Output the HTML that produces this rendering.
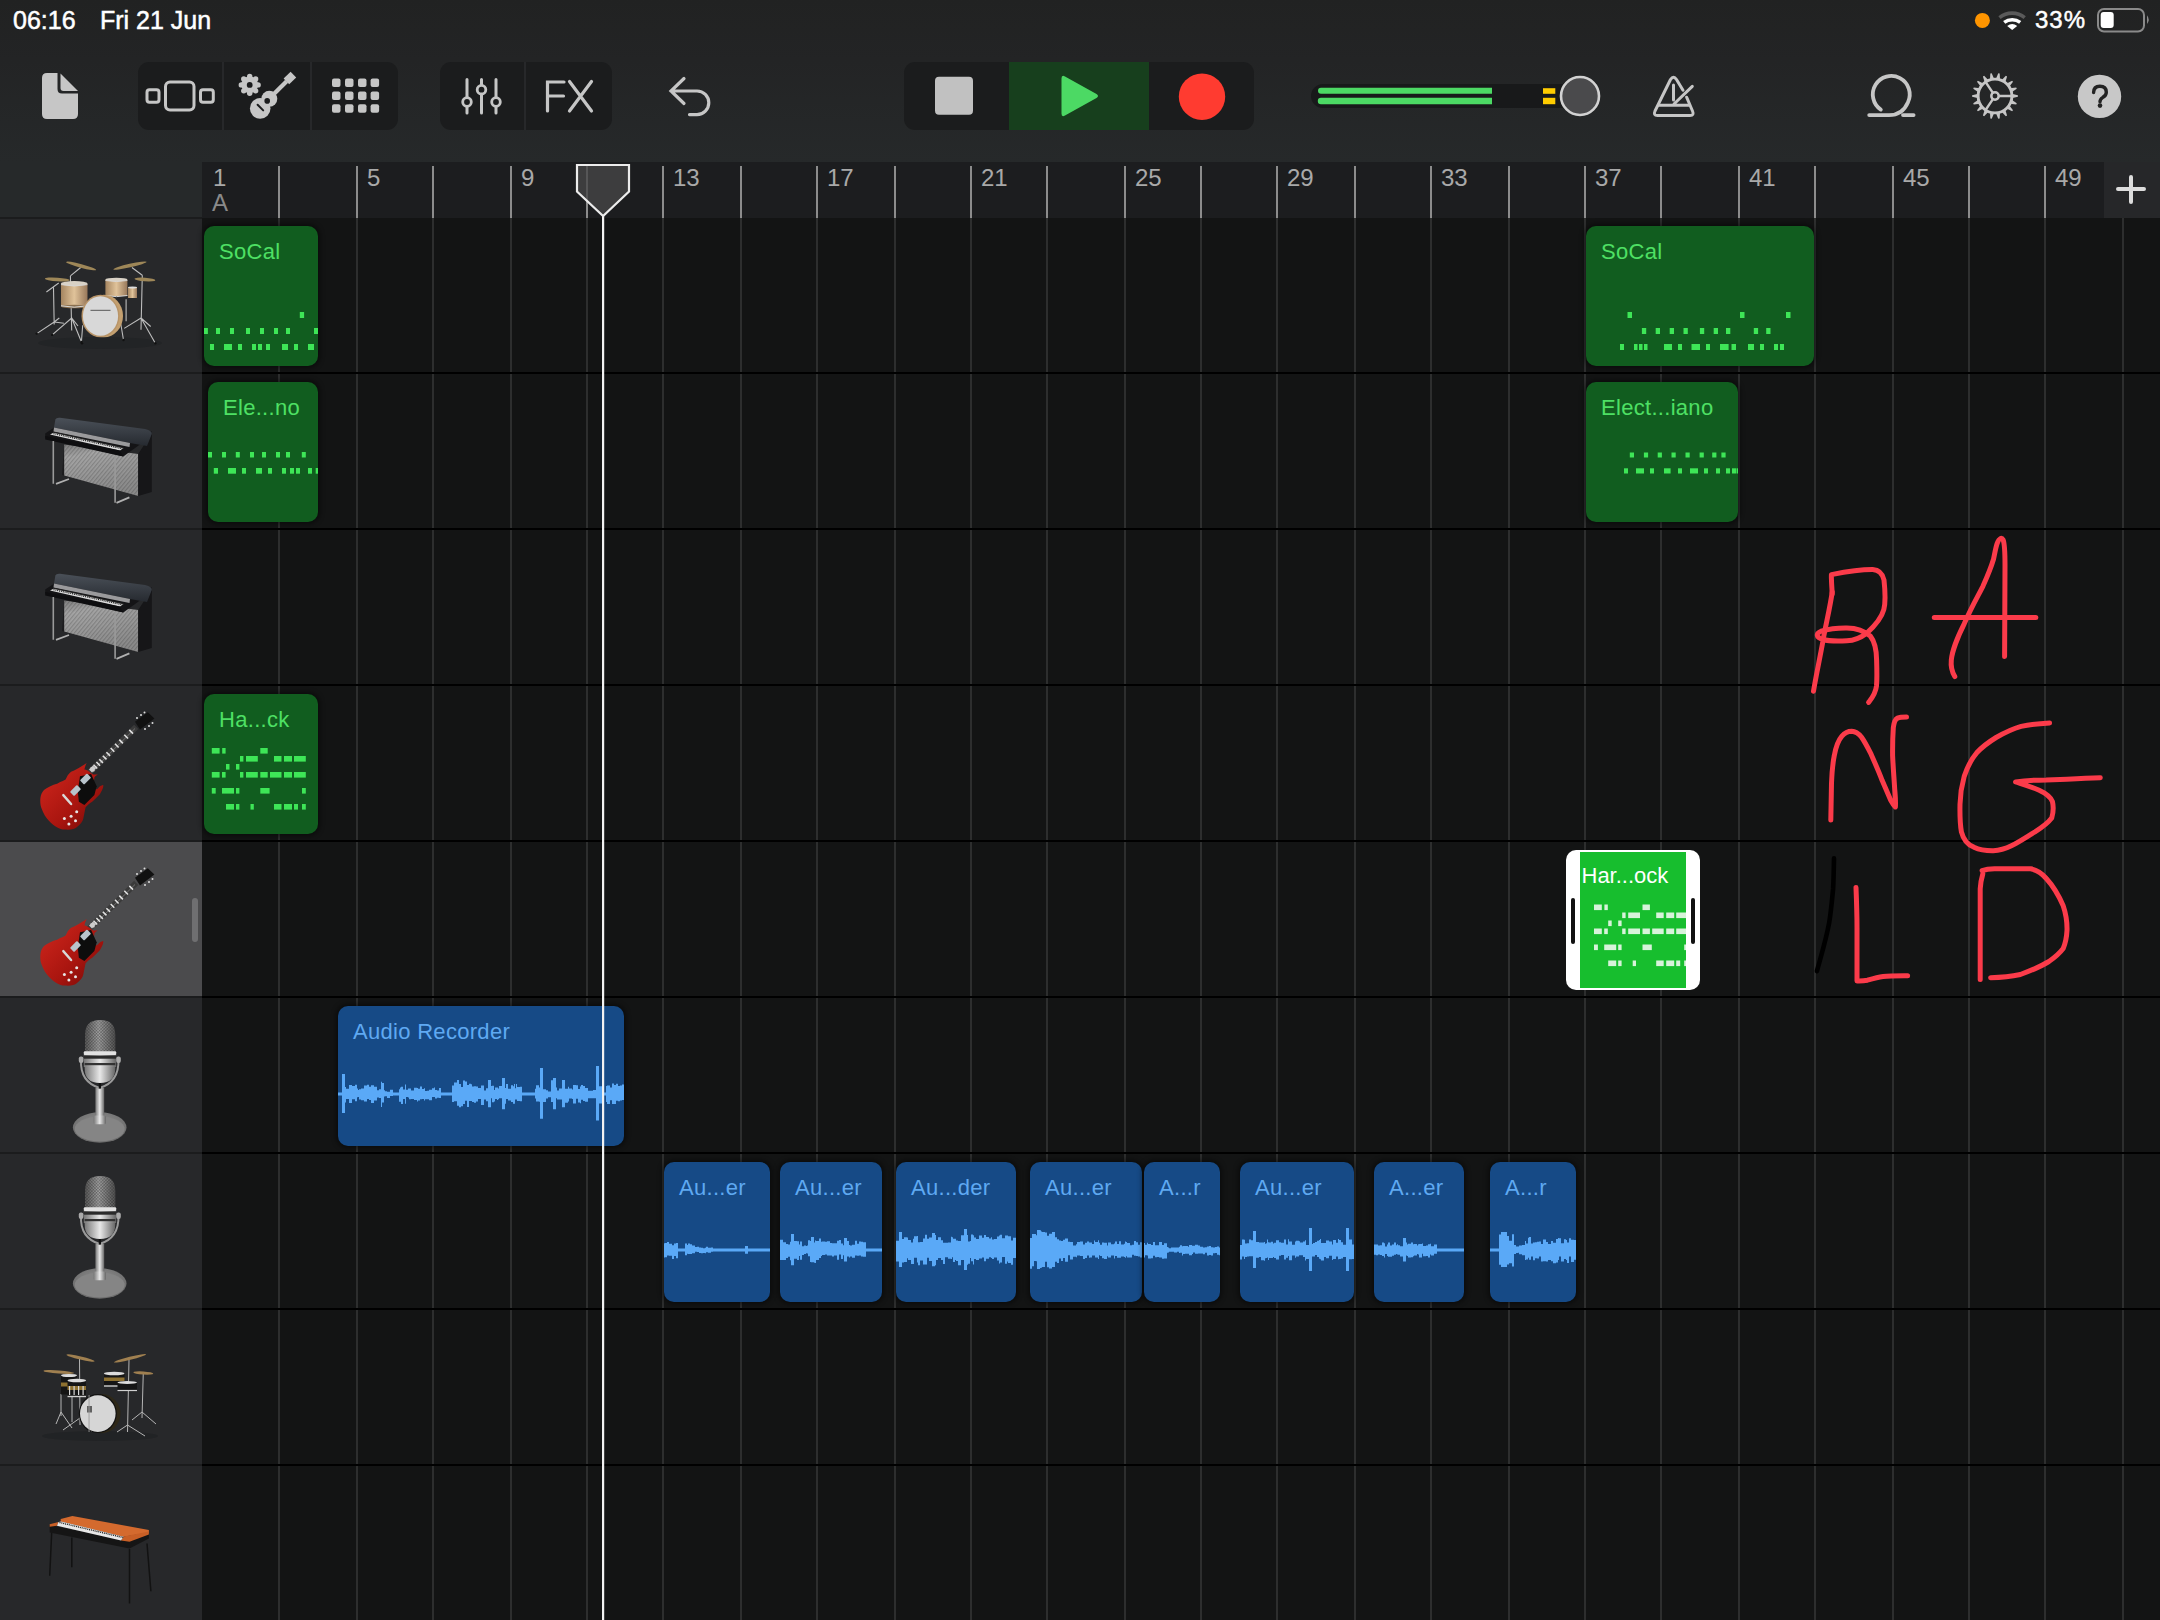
<!DOCTYPE html><html><head><meta charset="utf-8"><style>
*{margin:0;padding:0;box-sizing:border-box}
html,body{width:2160px;height:1620px;overflow:hidden;background:#131414;font-family:"Liberation Sans", sans-serif}
.a{position:absolute}
.reg{position:absolute;border-radius:10px;overflow:hidden;box-shadow:0 0 5px 2px rgba(0,0,0,0.45)}
.mid{background:#115d1f}
.aud{background:#164a86}
.rt{position:absolute;left:15px;top:14.5px;font-size:22px;line-height:22px;white-space:nowrap;letter-spacing:0.3px}
.mid .rt{color:#4ee064}
.aud .rt{color:#5fa9f2}
</style></head><body>
<div class="a" style="left:0;top:0;width:2160px;height:218px;background:linear-gradient(#212222 0px,#232425 60px,#26292a 162px)"></div><div class="a" style="left:0;top:218px;width:202px;height:1402px;background:#27282a"></div><div class="a" style="left:202px;top:162px;width:1902px;height:56px;background:#1c1d1f"></div><div class="a" style="left:2104px;top:162px;width:56px;height:56px;background:#262729"></div><svg class="a" style="left:0;top:0" width="2160" height="1620" viewBox="0 0 2160 1620"><rect x="278.00" y="166" width="2" height="52" fill="#8c8c8c"/><rect x="278.00" y="218" width="2" height="1402" fill="#2d2e2e"/><rect x="356.00" y="166" width="2" height="52" fill="#8c8c8c"/><rect x="356.00" y="218" width="2" height="1402" fill="#2d2e2e"/><rect x="432.00" y="166" width="2" height="52" fill="#8c8c8c"/><rect x="432.00" y="218" width="2" height="1402" fill="#2d2e2e"/><rect x="510.00" y="166" width="2" height="52" fill="#8c8c8c"/><rect x="510.00" y="218" width="2" height="1402" fill="#2d2e2e"/><rect x="586.00" y="166" width="2" height="52" fill="#8c8c8c"/><rect x="586.00" y="218" width="2" height="1402" fill="#2d2e2e"/><rect x="662.00" y="166" width="2" height="52" fill="#8c8c8c"/><rect x="662.00" y="218" width="2" height="1402" fill="#2d2e2e"/><rect x="740.00" y="166" width="2" height="52" fill="#8c8c8c"/><rect x="740.00" y="218" width="2" height="1402" fill="#2d2e2e"/><rect x="816.00" y="166" width="2" height="52" fill="#8c8c8c"/><rect x="816.00" y="218" width="2" height="1402" fill="#2d2e2e"/><rect x="894.00" y="166" width="2" height="52" fill="#8c8c8c"/><rect x="894.00" y="218" width="2" height="1402" fill="#2d2e2e"/><rect x="970.00" y="166" width="2" height="52" fill="#8c8c8c"/><rect x="970.00" y="218" width="2" height="1402" fill="#2d2e2e"/><rect x="1046.00" y="166" width="2" height="52" fill="#8c8c8c"/><rect x="1046.00" y="218" width="2" height="1402" fill="#2d2e2e"/><rect x="1124.00" y="166" width="2" height="52" fill="#8c8c8c"/><rect x="1124.00" y="218" width="2" height="1402" fill="#2d2e2e"/><rect x="1200.00" y="166" width="2" height="52" fill="#8c8c8c"/><rect x="1200.00" y="218" width="2" height="1402" fill="#2d2e2e"/><rect x="1276.00" y="166" width="2" height="52" fill="#8c8c8c"/><rect x="1276.00" y="218" width="2" height="1402" fill="#2d2e2e"/><rect x="1354.00" y="166" width="2" height="52" fill="#8c8c8c"/><rect x="1354.00" y="218" width="2" height="1402" fill="#2d2e2e"/><rect x="1430.00" y="166" width="2" height="52" fill="#8c8c8c"/><rect x="1430.00" y="218" width="2" height="1402" fill="#2d2e2e"/><rect x="1508.00" y="166" width="2" height="52" fill="#8c8c8c"/><rect x="1508.00" y="218" width="2" height="1402" fill="#2d2e2e"/><rect x="1584.00" y="166" width="2" height="52" fill="#8c8c8c"/><rect x="1584.00" y="218" width="2" height="1402" fill="#2d2e2e"/><rect x="1660.00" y="166" width="2" height="52" fill="#8c8c8c"/><rect x="1660.00" y="218" width="2" height="1402" fill="#2d2e2e"/><rect x="1738.00" y="166" width="2" height="52" fill="#8c8c8c"/><rect x="1738.00" y="218" width="2" height="1402" fill="#2d2e2e"/><rect x="1814.00" y="166" width="2" height="52" fill="#8c8c8c"/><rect x="1814.00" y="218" width="2" height="1402" fill="#2d2e2e"/><rect x="1892.00" y="166" width="2" height="52" fill="#8c8c8c"/><rect x="1892.00" y="218" width="2" height="1402" fill="#2d2e2e"/><rect x="1968.00" y="166" width="2" height="52" fill="#8c8c8c"/><rect x="1968.00" y="218" width="2" height="1402" fill="#2d2e2e"/><rect x="2044.00" y="166" width="2" height="52" fill="#8c8c8c"/><rect x="2044.00" y="218" width="2" height="1402" fill="#2d2e2e"/><rect x="2122.00" y="218" width="2" height="1402" fill="#2d2e2e"/><rect x="0" y="217" width="202" height="2" fill="#1b1c1d"/><rect x="0" y="372" width="202" height="2" fill="#1b1c1d"/><rect x="202" y="372" width="1958" height="2" fill="#000"/><rect x="0" y="528" width="202" height="2" fill="#1b1c1d"/><rect x="202" y="528" width="1958" height="2" fill="#000"/><rect x="0" y="684" width="202" height="2" fill="#1b1c1d"/><rect x="202" y="684" width="1958" height="2" fill="#000"/><rect x="0" y="840" width="202" height="2" fill="#1b1c1d"/><rect x="202" y="840" width="1958" height="2" fill="#000"/><rect x="0" y="996" width="202" height="2" fill="#1b1c1d"/><rect x="202" y="996" width="1958" height="2" fill="#000"/><rect x="0" y="1152" width="202" height="2" fill="#1b1c1d"/><rect x="202" y="1152" width="1958" height="2" fill="#000"/><rect x="0" y="1308" width="202" height="2" fill="#1b1c1d"/><rect x="202" y="1308" width="1958" height="2" fill="#000"/><rect x="0" y="1464" width="202" height="2" fill="#1b1c1d"/><rect x="202" y="1464" width="1958" height="2" fill="#000"/></svg><div class="a" style="left:0;top:842px;width:202px;height:154px;background:#4b4b4d"></div><div class="a" style="left:192px;top:898px;width:6px;height:44px;border-radius:3px;background:#6f6f71"></div><div class="a" style="left:213.0px;top:164px;font-size:24px;color:#a9a9a9;line-height:28px">1</div><div class="a" style="left:367.0px;top:164px;font-size:24px;color:#a9a9a9;line-height:28px">5</div><div class="a" style="left:521.0px;top:164px;font-size:24px;color:#a9a9a9;line-height:28px">9</div><div class="a" style="left:673.0px;top:164px;font-size:24px;color:#a9a9a9;line-height:28px">13</div><div class="a" style="left:827.0px;top:164px;font-size:24px;color:#a9a9a9;line-height:28px">17</div><div class="a" style="left:981.0px;top:164px;font-size:24px;color:#a9a9a9;line-height:28px">21</div><div class="a" style="left:1135.0px;top:164px;font-size:24px;color:#a9a9a9;line-height:28px">25</div><div class="a" style="left:1287.0px;top:164px;font-size:24px;color:#a9a9a9;line-height:28px">29</div><div class="a" style="left:1441.0px;top:164px;font-size:24px;color:#a9a9a9;line-height:28px">33</div><div class="a" style="left:1595.0px;top:164px;font-size:24px;color:#a9a9a9;line-height:28px">37</div><div class="a" style="left:1749.0px;top:164px;font-size:24px;color:#a9a9a9;line-height:28px">41</div><div class="a" style="left:1903.0px;top:164px;font-size:24px;color:#a9a9a9;line-height:28px">45</div><div class="a" style="left:2055.0px;top:164px;font-size:24px;color:#a9a9a9;line-height:28px">49</div><div class="a" style="left:212px;top:189px;font-size:24px;color:#8a8a8a;line-height:28px">A</div><svg class="a" style="left:2104px;top:162px" width="56" height="56"><path d="M27 15v25M14 27h26" stroke="#dcdcdc" stroke-width="4" stroke-linecap="round"/></svg><div class="a" style="left:13px;top:4px;font-size:25px;line-height:32px;color:#fff;white-space:nowrap;-webkit-text-stroke:0.5px #fff">06:16</div>
<div class="a" style="left:100px;top:4px;font-size:25px;line-height:32px;color:#fff;white-space:nowrap;-webkit-text-stroke:0.5px #fff">Fri 21 Jun</div>
<svg class="a" style="left:1960px;top:0" width="200" height="40" viewBox="0 0 200 40">
<circle cx="22.4" cy="20.4" r="7.5" fill="#ff9500"/>
<path d="M39.5 17.6 A20 20 0 0 1 64.7 17.6" stroke="#5a5a5a" stroke-width="3.6" fill="none"/>
<path d="M44.2 22.4 A13.5 13.5 0 0 1 60.2 22.4" stroke="#fff" stroke-width="3.6" fill="none"/>
<path d="M52.2 30 L47.2 26 A8 8 0 0 1 57.2 26 Z" fill="#fff"/>
<rect x="138" y="9" width="46" height="22.5" rx="6" fill="none" stroke="#8a8a8a" stroke-width="2"/>
<rect x="140.7" y="11.9" width="13" height="16" rx="3" fill="#fff"/>
<path d="M187 15.3 Q190.5 19.6 187 24 Z" fill="#8a8a8a"/>
</svg>
<div class="a" style="left:2035px;top:4px;font-size:24px;line-height:32px;color:#fff;white-space:nowrap;letter-spacing:1px;-webkit-text-stroke:0.5px #fff">33%</div>
<svg class="a" style="left:0;top:0" width="2160" height="160" viewBox="0 0 2160 160">
<g fill="#c6c6c6">
<path d="M47 73 H57.5 V89 Q57.5 93.5 62 93.5 H78 V114 Q78 119 73 119 H47 Q42 119 42 114 V78 Q42 73 47 73 Z"/>
<path d="M60.5 73.5 L78 91 H63.5 Q60.5 91 60.5 88 Z"/>
</g>
<rect x="138" y="62" width="260" height="68" rx="11" fill="#1b1c1d"/>
<rect x="222" y="62" width="2" height="68" fill="#27282a"/>
<rect x="310" y="62" width="2" height="68" fill="#27282a"/>
<g fill="none" stroke="#c6c6c6" stroke-width="3">
<rect x="147" y="89.8" width="12" height="12.4" rx="2.5"/>
<rect x="165.5" y="82" width="28.5" height="28" rx="4.5"/>
<rect x="200.5" y="89.8" width="12.8" height="12.4" rx="2.5"/>
</g>
<g fill="#c6c6c6">
<circle cx="249.7" cy="84.9" r="8.4"/><circle cx="258.10" cy="84.90" r="2.7"/><circle cx="255.64" cy="90.84" r="2.7"/><circle cx="249.70" cy="93.30" r="2.7"/><circle cx="243.76" cy="90.84" r="2.7"/><circle cx="241.30" cy="84.90" r="2.7"/><circle cx="243.76" cy="78.96" r="2.7"/><circle cx="249.70" cy="76.50" r="2.7"/><circle cx="255.64" cy="78.96" r="2.7"/>
<circle cx="249.7" cy="84.9" r="2.9" fill="#1b1c1d"/>
<circle cx="260.2" cy="108.4" r="10.3"/>
<circle cx="269.3" cy="98.8" r="8"/>
<path d="M272.6 92.3 L285.2 79.7 L288.2 82.7 L275.6 95.3 Z"/>
<path d="M283.6 78.6 L290.6 71.8 L296.2 77.4 L289.2 84.2 Z"/>
<circle cx="267.2" cy="100.9" r="2.8" fill="#1b1c1d"/>
<path d="M257.6 104.7 L263.2 110.4" stroke="#1b1c1d" stroke-width="2" stroke-linecap="round"/>
</g>
<g fill="#c6c6c6">
<rect x="332" y="78.6" width="8.5" height="8.5" rx="2"/><rect x="345" y="78.6" width="8.5" height="8.5" rx="2"/><rect x="358" y="78.6" width="8.5" height="8.5" rx="2"/><rect x="370.6" y="78.6" width="8.5" height="8.5" rx="2"/>
<rect x="332" y="91.4" width="8.5" height="8.5" rx="2"/><rect x="345" y="91.4" width="8.5" height="8.5" rx="2"/><rect x="358" y="91.4" width="8.5" height="8.5" rx="2"/><rect x="370.6" y="91.4" width="8.5" height="8.5" rx="2"/>
<rect x="332" y="104.2" width="8.5" height="8.5" rx="2"/><rect x="345" y="104.2" width="8.5" height="8.5" rx="2"/><rect x="358" y="104.2" width="8.5" height="8.5" rx="2"/><rect x="370.6" y="104.2" width="8.5" height="8.5" rx="2"/>
</g>
<rect x="440" y="62" width="172" height="68" rx="11" fill="#1b1c1d"/>
<rect x="524" y="62" width="2" height="68" fill="#27282a"/>
<g stroke="#c6c6c6" stroke-width="3" stroke-linecap="round" fill="none">
<path d="M467 79.5V113M481.5 79.5V113M496 79.5V113"/>
</g>
<g stroke="#c6c6c6" stroke-width="2.8" fill="#1b1c1d">
<circle cx="467" cy="102" r="4.3"/><circle cx="481.5" cy="89.7" r="4.3"/><circle cx="496" cy="102" r="4.3"/>
</g>
<g stroke="#c6c6c6" stroke-width="3.2" stroke-linecap="round" fill="none">
<path d="M547.5 111V82H564M547.5 96H563.5"/>
<path d="M569.5 81.5L591.5 111M591.5 81.5L569.5 111"/>
<path d="M684 78.5L671 91L684 103.5M671 91H697A11.8 11.8 0 0 1 697 114.6H689.5"/>
</g>
<rect x="904" y="62" width="350" height="68" rx="11" fill="#1b1c1d"/>
<rect x="1009" y="62" width="140" height="68" fill="#173f1d"/>
<rect x="935" y="76.7" width="38" height="38" rx="4" fill="#c1c1c1"/>
<path d="M1061.5 78.5 Q1061.5 74.5 1065 76.5 L1096.5 94 Q1099.5 96 1096.5 98 L1065 115.5 Q1061.5 117.5 1061.5 113.5 Z" fill="#4cd964"/>
<circle cx="1202" cy="96.7" r="23.2" fill="#ff3b30"/>
<rect x="1311" y="84" width="262" height="24" rx="12" fill="#18191a"/>
<path d="M1321 87.8H1492V93.8H1321A3 3 0 0 1 1321 87.8Z M1321 97.8H1492V104.2H1321A3.2 3.2 0 0 1 1321 97.8Z" fill="#4cd964"/>
<rect x="1543" y="88.2" width="12.3" height="5.6" fill="#ffcc00"/>
<rect x="1543" y="97.8" width="12.3" height="6.4" fill="#ffcc00"/>
<circle cx="1580" cy="96" r="19" fill="#4a4a4c" stroke="#d2d2d2" stroke-width="2.6"/>
<g stroke="#c6c6c6" stroke-width="3" stroke-linecap="round" stroke-linejoin="round" fill="none">
<path d="M1683 90.2 L1676.5 79.5 Q1673.5 75 1670.5 79.5 L1655 111 Q1653 115.5 1657.5 115.5 H1690 Q1694.5 115.5 1692.5 111 L1686.6 97.2"/>
<path d="M1659 105.3H1689.5M1673.5 85V100M1674 104L1692.3 86.3"/>
<path d="M1869.2 115.1H1889 Q1902.5 115.1 1908 102.2 A18.45 18.45 0 1 0 1880.8 109.6M1903 115.1H1913.6" stroke-width="3.8"/>
</g>
<g stroke="#c6c6c6" fill="none">
<circle cx="1995" cy="96" r="16.9" stroke-width="2.9"/>
<circle cx="1995" cy="96" r="3.7" stroke-width="2.5"/>
<path d="M1998.7 96H2012.2M1992.9 92.9L1985.5 81.9M1992.9 99.1L1985.5 110.1" stroke-width="2.5"/>
</g>
<g fill="#c6c6c6">
<path d="M2011.50 93.80 L2017.90 95.30 L2017.90 96.70 L2011.50 98.20Z"/>
<path d="M2011.26 99.58 L2016.76 103.17 L2016.28 104.49 L2009.75 103.71Z"/>
<path d="M2009.05 104.92 L2012.99 110.18 L2012.09 111.26 L2006.23 108.29Z"/>
<path d="M2005.16 109.19 L2007.06 115.48 L2005.84 116.18 L2001.34 111.39Z"/>
<path d="M2000.03 111.87 L1999.67 118.43 L1998.29 118.67 L1995.70 112.63Z"/>
<path d="M1994.30 112.63 L1991.71 118.67 L1990.33 118.43 L1989.97 111.87Z"/>
<path d="M1988.66 111.39 L1984.16 116.18 L1982.94 115.48 L1984.84 109.19Z"/>
<path d="M1983.77 108.29 L1977.91 111.26 L1977.01 110.18 L1980.95 104.92Z"/>
<path d="M1980.25 103.71 L1973.72 104.49 L1973.24 103.17 L1978.74 99.58Z"/>
<path d="M1978.50 98.20 L1972.10 96.70 L1972.10 95.30 L1978.50 93.80Z"/>
<path d="M1978.74 92.42 L1973.24 88.83 L1973.72 87.51 L1980.25 88.29Z"/>
<path d="M1980.95 87.08 L1977.01 81.82 L1977.91 80.74 L1983.77 83.71Z"/>
<path d="M1984.84 82.81 L1982.94 76.52 L1984.16 75.82 L1988.66 80.61Z"/>
<path d="M1989.97 80.13 L1990.33 73.57 L1991.71 73.33 L1994.30 79.37Z"/>
<path d="M1995.70 79.37 L1998.29 73.33 L1999.67 73.57 L2000.03 80.13Z"/>
<path d="M2001.34 80.61 L2005.84 75.82 L2007.06 76.52 L2005.16 82.81Z"/>
<path d="M2006.23 83.71 L2012.09 80.74 L2012.99 81.82 L2009.05 87.08Z"/>
<path d="M2009.75 88.29 L2016.28 87.51 L2016.76 88.83 L2011.26 92.42Z"/>
</g>
<circle cx="2099.5" cy="96.4" r="21.7" fill="#c8c8c8"/>
<path d="M2093.6 92.6 Q2093.6 86.2 2099.9 86.2 Q2106.3 86.2 2106.3 92.2 Q2106.3 95.6 2102.6 97.6 Q2100 99.1 2100 101.8" stroke="#232323" stroke-width="3.4" fill="none" stroke-linecap="round"/>
<circle cx="2100" cy="105.6" r="2.3" fill="#232323"/>
</svg>
<div class="reg mid" style="left:204px;top:226px;width:114px;height:140px"><div class="rt">SoCal</div><svg class="a" style="left:0;top:0" width="114" height="140"><rect x="95.8" y="86.0" width="4.3" height="6.0" fill="#3ee657"/><rect x="-0.1" y="102.0" width="4.0" height="6.0" fill="#3ee657"/><rect x="12.0" y="102.0" width="4.0" height="6.0" fill="#3ee657"/><rect x="26.0" y="102.0" width="4.0" height="6.0" fill="#3ee657"/><rect x="42.0" y="102.0" width="4.0" height="6.0" fill="#3ee657"/><rect x="56.0" y="102.0" width="4.0" height="6.0" fill="#3ee657"/><rect x="70.0" y="102.0" width="4.0" height="6.0" fill="#3ee657"/><rect x="82.0" y="102.0" width="4.0" height="6.0" fill="#3ee657"/><rect x="110.0" y="102.0" width="4.0" height="6.0" fill="#3ee657"/><rect x="6.0" y="118.0" width="4.0" height="6.0" fill="#3ee657"/><rect x="20.0" y="118.0" width="8.0" height="6.0" fill="#3ee657"/><rect x="34.0" y="118.0" width="4.0" height="6.0" fill="#3ee657"/><rect x="48.0" y="118.0" width="4.0" height="6.0" fill="#3ee657"/><rect x="54.0" y="118.0" width="4.0" height="6.0" fill="#3ee657"/><rect x="62.0" y="118.0" width="4.0" height="6.0" fill="#3ee657"/><rect x="78.0" y="118.0" width="6.0" height="6.0" fill="#3ee657"/><rect x="90.0" y="118.0" width="4.0" height="6.0" fill="#3ee657"/><rect x="104.0" y="118.0" width="6.0" height="6.0" fill="#3ee657"/></svg></div>
<div class="reg mid" style="left:1586px;top:226px;width:228px;height:140px"><div class="rt">SoCal</div><svg class="a" style="left:0;top:0" width="228" height="140"><rect x="41.5" y="86.0" width="4.5" height="6.0" fill="#3ee657"/><rect x="154.0" y="86.0" width="4.5" height="6.0" fill="#3ee657"/><rect x="200.0" y="86.0" width="4.5" height="6.0" fill="#3ee657"/><rect x="55.9" y="102.0" width="4.3" height="6.0" fill="#3ee657"/><rect x="69.7" y="102.0" width="4.3" height="6.0" fill="#3ee657"/><rect x="83.7" y="102.0" width="4.3" height="6.0" fill="#3ee657"/><rect x="97.5" y="102.0" width="4.3" height="6.0" fill="#3ee657"/><rect x="113.9" y="102.0" width="4.3" height="6.0" fill="#3ee657"/><rect x="127.7" y="102.0" width="4.3" height="6.0" fill="#3ee657"/><rect x="140.0" y="102.0" width="4.3" height="6.0" fill="#3ee657"/><rect x="167.8" y="102.0" width="4.3" height="6.0" fill="#3ee657"/><rect x="180.2" y="102.0" width="4.3" height="6.0" fill="#3ee657"/><rect x="34.0" y="118.0" width="4.0" height="6.0" fill="#3ee657"/><rect x="48.0" y="118.0" width="3.5" height="6.0" fill="#3ee657"/><rect x="53.0" y="118.0" width="3.5" height="6.0" fill="#3ee657"/><rect x="58.0" y="118.0" width="3.5" height="6.0" fill="#3ee657"/><rect x="78.0" y="118.0" width="8.0" height="6.0" fill="#3ee657"/><rect x="92.0" y="118.0" width="4.0" height="6.0" fill="#3ee657"/><rect x="105.5" y="118.0" width="8.5" height="6.0" fill="#3ee657"/><rect x="120.0" y="118.0" width="4.0" height="6.0" fill="#3ee657"/><rect x="134.0" y="118.0" width="8.6" height="6.0" fill="#3ee657"/><rect x="145.5" y="118.0" width="4.5" height="6.0" fill="#3ee657"/><rect x="162.0" y="118.0" width="6.0" height="6.0" fill="#3ee657"/><rect x="174.0" y="118.0" width="4.0" height="6.0" fill="#3ee657"/><rect x="188.0" y="118.0" width="4.0" height="6.0" fill="#3ee657"/><rect x="194.0" y="118.0" width="4.0" height="6.0" fill="#3ee657"/></svg></div>
<div class="reg mid" style="left:208px;top:382px;width:110px;height:140px"><div class="rt">Ele...no</div><svg class="a" style="left:0;top:0" width="110" height="140"><rect x="0.0" y="70.0" width="4.0" height="5.5" fill="#3ee657"/><rect x="14.0" y="70.0" width="4.0" height="5.5" fill="#3ee657"/><rect x="27.8" y="70.0" width="4.0" height="5.5" fill="#3ee657"/><rect x="42.0" y="70.0" width="4.0" height="5.5" fill="#3ee657"/><rect x="54.0" y="70.0" width="4.0" height="5.5" fill="#3ee657"/><rect x="68.0" y="70.0" width="4.0" height="5.5" fill="#3ee657"/><rect x="78.0" y="70.0" width="4.0" height="5.5" fill="#3ee657"/><rect x="93.8" y="70.0" width="4.0" height="5.5" fill="#3ee657"/><rect x="5.8" y="86.0" width="4.2" height="5.7" fill="#3ee657"/><rect x="20.0" y="86.0" width="8.0" height="5.7" fill="#3ee657"/><rect x="34.0" y="86.0" width="4.0" height="5.7" fill="#3ee657"/><rect x="48.0" y="86.0" width="6.0" height="5.7" fill="#3ee657"/><rect x="60.0" y="86.0" width="4.0" height="5.7" fill="#3ee657"/><rect x="74.0" y="86.0" width="4.0" height="5.7" fill="#3ee657"/><rect x="82.0" y="86.0" width="4.0" height="5.7" fill="#3ee657"/><rect x="88.0" y="86.0" width="4.0" height="5.7" fill="#3ee657"/><rect x="100.0" y="86.0" width="4.0" height="5.7" fill="#3ee657"/><rect x="107.7" y="86.0" width="2.3" height="5.7" fill="#3ee657"/></svg></div>
<div class="reg mid" style="left:1586px;top:382px;width:152px;height:140px"><div class="rt">Elect...iano</div><svg class="a" style="left:0;top:0" width="152" height="140"><rect x="43.8" y="70.5" width="4.2" height="5.0" fill="#3ee657"/><rect x="57.9" y="70.5" width="4.2" height="5.0" fill="#3ee657"/><rect x="71.7" y="70.5" width="4.2" height="5.0" fill="#3ee657"/><rect x="85.5" y="70.5" width="4.2" height="5.0" fill="#3ee657"/><rect x="99.5" y="70.5" width="4.2" height="5.0" fill="#3ee657"/><rect x="113.6" y="70.5" width="4.2" height="5.0" fill="#3ee657"/><rect x="126.2" y="70.5" width="4.2" height="5.0" fill="#3ee657"/><rect x="135.4" y="70.5" width="4.2" height="5.0" fill="#3ee657"/><rect x="38.0" y="86.3" width="4.0" height="5.2" fill="#3ee657"/><rect x="50.0" y="86.3" width="8.0" height="5.2" fill="#3ee657"/><rect x="64.0" y="86.3" width="4.0" height="5.2" fill="#3ee657"/><rect x="78.0" y="86.3" width="6.6" height="5.2" fill="#3ee657"/><rect x="92.0" y="86.3" width="4.0" height="5.2" fill="#3ee657"/><rect x="104.0" y="86.3" width="8.0" height="5.2" fill="#3ee657"/><rect x="118.0" y="86.3" width="4.0" height="5.2" fill="#3ee657"/><rect x="130.0" y="86.3" width="4.0" height="5.2" fill="#3ee657"/><rect x="140.0" y="86.3" width="4.0" height="5.2" fill="#3ee657"/><rect x="146.0" y="86.3" width="4.0" height="5.2" fill="#3ee657"/><rect x="150.5" y="86.3" width="1.5" height="5.2" fill="#3ee657"/></svg></div>
<div class="reg mid" style="left:204px;top:694px;width:114px;height:140px"><div class="rt">Ha...ck</div><svg class="a" style="left:0;top:0" width="114" height="140"><rect x="7.8" y="54.0" width="7.8" height="5.6" fill="#3ee657"/><rect x="18.2" y="54.0" width="3.4" height="5.6" fill="#3ee657"/><rect x="56.3" y="54.0" width="7.4" height="5.6" fill="#3ee657"/><rect x="36.0" y="62.0" width="3.4" height="5.6" fill="#3ee657"/><rect x="42.0" y="62.0" width="11.8" height="5.6" fill="#3ee657"/><rect x="70.0" y="62.0" width="7.5" height="5.6" fill="#3ee657"/><rect x="80.0" y="62.0" width="8.0" height="5.6" fill="#3ee657"/><rect x="90.0" y="62.0" width="11.8" height="5.6" fill="#3ee657"/><rect x="22.0" y="70.0" width="3.5" height="5.6" fill="#3ee657"/><rect x="32.0" y="70.0" width="3.4" height="5.6" fill="#3ee657"/><rect x="7.8" y="78.0" width="7.8" height="5.6" fill="#3ee657"/><rect x="18.0" y="78.0" width="3.6" height="5.6" fill="#3ee657"/><rect x="36.0" y="78.0" width="3.4" height="5.6" fill="#3ee657"/><rect x="42.0" y="78.0" width="11.8" height="5.6" fill="#3ee657"/><rect x="56.3" y="78.0" width="7.4" height="5.6" fill="#3ee657"/><rect x="66.0" y="78.0" width="11.5" height="5.6" fill="#3ee657"/><rect x="80.0" y="78.0" width="8.0" height="5.6" fill="#3ee657"/><rect x="90.0" y="78.0" width="11.8" height="5.6" fill="#3ee657"/><rect x="7.8" y="94.0" width="3.9" height="5.6" fill="#3ee657"/><rect x="18.0" y="94.0" width="12.0" height="5.6" fill="#3ee657"/><rect x="32.0" y="94.0" width="3.4" height="5.6" fill="#3ee657"/><rect x="56.3" y="94.0" width="9.3" height="5.6" fill="#3ee657"/><rect x="98.0" y="94.0" width="3.8" height="5.6" fill="#3ee657"/><rect x="22.0" y="110.0" width="8.0" height="5.6" fill="#3ee657"/><rect x="32.0" y="110.0" width="3.4" height="5.6" fill="#3ee657"/><rect x="46.5" y="110.0" width="3.3" height="5.6" fill="#3ee657"/><rect x="70.0" y="110.0" width="7.5" height="5.6" fill="#3ee657"/><rect x="80.0" y="110.0" width="8.0" height="5.6" fill="#3ee657"/><rect x="90.0" y="110.0" width="4.0" height="5.6" fill="#3ee657"/><rect x="98.0" y="110.0" width="3.8" height="5.6" fill="#3ee657"/></svg></div>
<div class="a" style="left:1566px;top:850px;width:134px;height:140px;border-radius:10px;background:#fff"></div>
<div class="a" style="left:1580px;top:852px;width:106px;height:136px;background:#17be2e;overflow:hidden"><div class="a" style="left:1.5px;top:12.5px;font-size:22px;line-height:22px;color:#fff;white-space:nowrap">Har...ock</div><svg class="a" style="left:0;top:0" width="106" height="136"><rect x="14.0" y="52.5" width="7.8" height="5.6" fill="#d7f3da"/><rect x="24.4" y="52.5" width="3.4" height="5.6" fill="#d7f3da"/><rect x="62.5" y="52.5" width="7.4" height="5.6" fill="#d7f3da"/><rect x="42.2" y="60.5" width="3.4" height="5.6" fill="#d7f3da"/><rect x="48.2" y="60.5" width="11.8" height="5.6" fill="#d7f3da"/><rect x="76.2" y="60.5" width="7.5" height="5.6" fill="#d7f3da"/><rect x="86.2" y="60.5" width="8.0" height="5.6" fill="#d7f3da"/><rect x="96.2" y="60.5" width="11.8" height="5.6" fill="#d7f3da"/><rect x="28.2" y="68.5" width="3.5" height="5.6" fill="#d7f3da"/><rect x="38.2" y="68.5" width="3.4" height="5.6" fill="#d7f3da"/><rect x="14.0" y="76.5" width="7.8" height="5.6" fill="#d7f3da"/><rect x="24.2" y="76.5" width="3.6" height="5.6" fill="#d7f3da"/><rect x="42.2" y="76.5" width="3.4" height="5.6" fill="#d7f3da"/><rect x="48.2" y="76.5" width="11.8" height="5.6" fill="#d7f3da"/><rect x="62.5" y="76.5" width="7.4" height="5.6" fill="#d7f3da"/><rect x="72.2" y="76.5" width="11.5" height="5.6" fill="#d7f3da"/><rect x="86.2" y="76.5" width="8.0" height="5.6" fill="#d7f3da"/><rect x="96.2" y="76.5" width="11.8" height="5.6" fill="#d7f3da"/><rect x="14.0" y="92.5" width="3.9" height="5.6" fill="#d7f3da"/><rect x="24.2" y="92.5" width="12.0" height="5.6" fill="#d7f3da"/><rect x="38.2" y="92.5" width="3.4" height="5.6" fill="#d7f3da"/><rect x="62.5" y="92.5" width="9.3" height="5.6" fill="#d7f3da"/><rect x="104.2" y="92.5" width="3.8" height="5.6" fill="#d7f3da"/><rect x="28.2" y="108.5" width="8.0" height="5.6" fill="#d7f3da"/><rect x="38.2" y="108.5" width="3.4" height="5.6" fill="#d7f3da"/><rect x="52.7" y="108.5" width="3.3" height="5.6" fill="#d7f3da"/><rect x="76.2" y="108.5" width="7.5" height="5.6" fill="#d7f3da"/><rect x="86.2" y="108.5" width="8.0" height="5.6" fill="#d7f3da"/><rect x="96.2" y="108.5" width="4.0" height="5.6" fill="#d7f3da"/><rect x="104.2" y="108.5" width="3.8" height="5.6" fill="#d7f3da"/></svg></div>
<div class="a" style="left:1571px;top:898px;width:4px;height:46px;border-radius:2px;background:#111"></div>
<div class="a" style="left:1691px;top:898px;width:4px;height:46px;border-radius:2px;background:#111"></div>
<div class="reg aud" style="left:338px;top:1006px;width:286px;height:140px"><div class="rt">Audio Recorder</div><svg class="a" style="left:0;top:0" width="286" height="140"><path d="M0 86.5h2V89.5h-2zM2 86.5h2V89.5h-2zM4 68.0h3V107.0h-3zM7 81.1h1V96.4h-1zM8 82.8h3V93.1h-3zM11 78.9h3V97.1h-3zM14 80.0h3V93.3h-3zM17 78.8h2V95.3h-2zM19 82.6h1V91.2h-1zM20 83.9h1V91.1h-1zM21 83.3h2V93.6h-2zM23 82.4h3V94.3h-3zM26 79.6h3V95.6h-3zM29 78.8h2V93.0h-2zM31 80.8h2V93.9h-2zM33 79.3h3V97.1h-3zM36 80.8h3V94.6h-3zM39 84.3h2V91.4h-2zM41 83.3h2V92.1h-2zM43 75.8h1V101.1h-1zM44 77.0h2V96.4h-2zM46 84.3h1V90.5h-1zM47 85.3h2V90.2h-2zM49 85.8h3V91.9h-3zM52 83.8h3V90.0h-3zM55 86.5h3V89.5h-3zM58 86.5h3V89.5h-3zM61 83.3h1V95.8h-1zM62 81.5h1V95.7h-1zM63 80.8h2V97.9h-2zM65 83.5h2V93.1h-2zM67 78.4h1V97.7h-1zM68 83.7h2V91.0h-2zM70 82.6h1V91.5h-1zM71 82.6h2V93.2h-2zM73 84.4h3V93.1h-3zM76 81.8h3V94.0h-3zM79 81.9h1V95.5h-1zM80 82.7h2V94.5h-2zM82 80.6h2V93.3h-2zM84 83.1h2V93.0h-2zM86 82.2h1V94.6h-1zM87 84.9h2V93.2h-2zM89 84.8h2V93.3h-2zM91 83.7h3V94.3h-3zM94 82.3h2V91.1h-2zM96 81.6h1V91.1h-1zM97 84.1h2V92.6h-2zM99 84.4h2V91.7h-2zM101 82.0h2V92.0h-2zM103 86.5h3V89.5h-3zM106 86.5h1V89.5h-1zM107 86.5h1V89.5h-1zM108 86.5h2V89.5h-2zM110 86.5h2V89.5h-2zM112 86.5h2V89.5h-2zM114 79.6h2V96.0h-2zM116 76.4h3V95.3h-3zM119 74.1h2V99.8h-2zM121 78.1h2V101.2h-2zM123 80.9h2V100.3h-2zM125 74.6h2V98.0h-2zM127 75.4h2V94.8h-2zM129 79.0h2V101.0h-2zM131 77.8h2V95.0h-2zM133 78.2h1V95.1h-1zM134 80.5h2V96.1h-2zM136 80.2h2V96.8h-2zM138 80.5h2V95.5h-2zM140 82.1h3V93.0h-3zM143 79.6h3V98.9h-3zM146 84.4h2V93.4h-2zM148 82.2h2V95.2h-2zM150 74.0h3V101.3h-3zM153 80.1h1V92.2h-1zM154 79.7h2V96.3h-2zM156 83.9h1V95.6h-1zM157 81.6h2V93.1h-2zM159 81.5h1V94.0h-1zM160 82.4h1V93.2h-1zM161 80.1h3V92.3h-3zM164 72.0h3V103.2h-3zM167 82.0h1V97.8h-1zM168 78.1h2V93.0h-2zM170 82.7h3V94.6h-3zM173 79.3h2V96.1h-2zM175 80.2h1V97.7h-1zM176 77.9h1V97.7h-1zM177 82.3h1V93.4h-1zM178 77.9h1V93.5h-1zM179 81.1h3V94.9h-3zM182 80.7h2V95.3h-2zM184 86.5h2V89.5h-2zM186 86.5h2V89.5h-2zM188 86.5h2V89.5h-2zM190 86.5h2V89.5h-2zM192 86.5h2V89.5h-2zM194 86.5h3V89.5h-3zM197 82.8h1V92.5h-1zM198 79.2h3V95.6h-3zM201 81.5h1V95.8h-1zM202 62.0h3V112.7h-3zM205 83.2h3V95.9h-3zM208 84.2h2V92.6h-2zM210 85.4h3V91.2h-3zM213 74.2h2V96.1h-2zM215 72.0h3V103.2h-3zM218 81.6h1V92.3h-1zM219 84.6h2V93.5h-2zM221 82.6h3V93.6h-3zM224 74.0h3V101.3h-3zM227 82.7h3V96.7h-3zM230 80.7h1V95.5h-1zM231 82.5h3V92.6h-3zM234 83.4h1V93.1h-1zM235 79.0h3V97.6h-3zM238 79.2h2V92.7h-2zM240 82.9h2V96.5h-2zM242 80.5h1V97.2h-1zM243 79.0h2V93.8h-2zM245 80.0h2V95.0h-2zM247 82.1h3V95.7h-3zM250 84.7h2V92.3h-2zM252 84.8h3V92.3h-3zM255 84.0h3V92.3h-3zM258 60.0h3V114.6h-3zM261 80.3h3V97.6h-3zM264 86.5h2V89.5h-2zM266 86.5h2V89.5h-2zM268 80.0h1V95.9h-1zM269 79.5h3V98.1h-3zM272 81.4h2V94.2h-2zM274 77.4h2V98.1h-2zM276 79.0h2V98.1h-2zM278 77.7h2V94.8h-2zM280 80.1h2V95.3h-2zM282 79.6h2V94.4h-2zM284 78.4h2V93.9h-2z" fill="#5aa9f7"/></svg></div>
<div class="reg aud" style="left:664px;top:1162px;width:106px;height:140px"><div class="rt">Au...er</div><svg class="a" style="left:0;top:0" width="106" height="140"><path d="M0 81.2h1V95.6h-1zM1 81.0h2V95.2h-2zM3 80.0h2V93.4h-2zM5 81.7h3V93.8h-3zM8 83.3h2V97.1h-2zM10 81.4h2V94.0h-2zM12 81.0h2V96.2h-2zM14 86.5h2V89.5h-2zM16 86.5h2V89.5h-2zM18 86.5h3V89.5h-3zM21 81.5h2V93.2h-2zM23 82.9h1V91.8h-1zM24 81.6h2V92.1h-2zM26 82.2h2V91.9h-2zM28 83.4h3V91.2h-3zM31 85.0h2V89.8h-2zM33 84.8h2V89.9h-2zM35 85.6h1V91.0h-1zM36 85.5h1V91.0h-1zM37 85.8h2V91.2h-2zM39 86.3h2V90.9h-2zM41 85.7h1V91.3h-1zM42 84.8h2V90.3h-2zM44 85.7h3V90.7h-3zM47 85.4h2V89.8h-2zM49 86.5h1V89.5h-1zM50 86.5h2V89.5h-2zM52 86.5h3V89.5h-3zM55 86.5h2V89.5h-2zM57 86.5h2V89.5h-2zM59 86.5h2V89.5h-2zM61 86.5h2V89.5h-2zM63 86.5h3V89.5h-3zM66 86.5h2V89.5h-2zM68 86.5h2V89.5h-2zM70 86.5h3V89.5h-3zM73 86.5h2V89.5h-2zM75 86.5h1V89.5h-1zM76 86.5h1V89.5h-1zM77 86.5h2V89.5h-2zM79 86.5h2V89.5h-2zM81 84.0h3V91.8h-3zM84 86.5h1V89.5h-1zM85 86.5h2V89.5h-2zM87 86.5h3V89.5h-3zM90 86.5h3V89.5h-3zM93 86.5h2V89.5h-2zM95 86.5h3V89.5h-3zM98 86.5h3V89.5h-3zM101 86.5h2V89.5h-2zM103 86.5h2V89.5h-2zM105 86.5h1V89.5h-1z" fill="#5aa9f7"/></svg></div>
<div class="reg aud" style="left:780px;top:1162px;width:102px;height:140px"><div class="rt">Au...er</div><svg class="a" style="left:0;top:0" width="102" height="140"><path d="M0 77.8h3V98.1h-3zM3 80.3h3V98.1h-3zM6 81.9h2V96.1h-2zM8 82.4h2V94.8h-2zM10 79.8h1V98.3h-1zM11 72.0h3V103.2h-3zM14 79.1h3V96.7h-3zM17 79.3h2V98.0h-2zM19 82.6h1V94.1h-1zM20 79.4h2V97.7h-2zM22 84.2h2V93.0h-2zM24 83.6h2V92.0h-2zM26 84.1h1V91.3h-1zM27 83.4h1V91.4h-1zM28 78.3h2V94.2h-2zM30 79.1h1V100.1h-1zM31 75.0h3V100.3h-3zM34 80.5h1V100.7h-1zM35 78.6h1V101.1h-1zM36 79.0h3V98.1h-3zM39 76.4h2V95.9h-2zM41 79.8h1V94.1h-1zM42 79.4h3V93.1h-3zM45 79.7h2V92.6h-2zM47 79.2h3V93.5h-3zM50 81.1h2V93.5h-2zM52 81.2h2V94.6h-2zM54 81.2h3V93.6h-3zM57 78.8h2V97.8h-2zM59 78.1h2V92.6h-2zM61 81.4h2V97.1h-2zM63 83.3h1V93.3h-1zM64 76.0h3V99.4h-3zM67 79.0h2V94.6h-2zM69 83.0h1V95.6h-1zM70 83.4h2V94.5h-2zM72 82.8h3V95.7h-3zM75 78.8h2V93.5h-2zM77 81.8h2V93.7h-2zM79 79.6h2V93.4h-2zM81 79.8h2V94.6h-2zM83 80.2h3V94.8h-3zM86 86.5h1V89.5h-1zM87 86.5h1V89.5h-1zM88 86.5h1V89.5h-1zM89 86.5h2V89.5h-2zM91 86.5h2V89.5h-2zM93 86.5h3V89.5h-3zM96 86.5h2V89.5h-2zM98 86.5h3V89.5h-3zM101 86.5h1V89.5h-1z" fill="#5aa9f7"/></svg></div>
<div class="reg aud" style="left:896px;top:1162px;width:120px;height:140px"><div class="rt">Au...der</div><svg class="a" style="left:0;top:0" width="120" height="140"><path d="M0 78.7h3V99.4h-3zM3 70.0h3V105.1h-3zM6 76.9h2V100.4h-2zM8 75.2h3V100.1h-3zM11 75.4h1V96.2h-1zM12 77.9h3V97.9h-3zM15 80.5h2V101.9h-2zM17 76.7h1V101.9h-1zM18 74.3h3V95.7h-3zM21 74.1h1V100.6h-1zM22 80.2h2V103.3h-2zM24 80.1h3V98.6h-3zM27 76.5h2V102.4h-2zM29 72.8h2V102.4h-2zM31 76.7h2V95.7h-2zM33 75.4h3V98.9h-3zM36 71.0h3V104.2h-3zM39 72.9h1V103.2h-1zM40 78.0h2V98.1h-2zM42 75.3h3V96.0h-3zM45 78.2h2V98.1h-2zM47 80.8h2V101.9h-2zM49 80.7h3V95.2h-3zM52 80.6h3V96.7h-3zM55 74.7h1V96.9h-1zM56 75.2h1V95.3h-1zM57 76.8h2V100.1h-2zM59 76.7h1V98.1h-1zM60 78.6h2V99.0h-2zM62 79.0h3V103.3h-3zM65 73.2h3V98.1h-3zM68 67.0h3V108.0h-3zM71 73.0h1V102.7h-1zM72 79.5h2V101.7h-2zM74 78.9h1V96.0h-1zM75 72.6h2V99.2h-2zM77 73.2h1V102.4h-1zM78 75.6h2V96.9h-2zM80 76.9h3V98.0h-3zM83 73.5h3V96.4h-3zM86 75.8h2V95.4h-2zM88 73.1h2V99.3h-2zM90 75.1h3V96.8h-3zM93 76.6h2V95.2h-2zM95 75.2h1V96.1h-1zM96 77.5h2V97.0h-2zM98 77.0h3V95.5h-3zM101 74.6h2V98.5h-2zM103 73.4h1V101.6h-1zM104 72.8h2V100.4h-2zM106 76.3h3V95.1h-3zM109 73.4h2V101.7h-2zM111 73.4h1V99.5h-1zM112 74.3h3V101.0h-3zM115 78.4h2V102.8h-2zM117 75.8h3V96.0h-3z" fill="#5aa9f7"/></svg></div>
<div class="reg aud" style="left:1030px;top:1162px;width:112px;height:140px"><div class="rt">Au...er</div><svg class="a" style="left:0;top:0" width="112" height="140"><path d="M0 75.9h2V106.8h-2zM2 72.0h2V104.2h-2zM4 72.1h2V99.0h-2zM6 73.3h1V99.3h-1zM7 68.0h3V107.0h-3zM10 68.3h1V106.0h-1zM11 69.6h1V105.7h-1zM12 70.0h3V105.1h-3zM15 70.4h2V99.8h-2zM17 73.7h2V105.2h-2zM19 71.8h3V106.6h-3zM22 70.0h3V105.1h-3zM25 75.2h2V99.7h-2zM27 77.3h2V101.1h-2zM29 78.5h2V96.5h-2zM31 78.9h2V98.9h-2zM33 77.7h2V96.1h-2zM35 76.4h3V99.7h-3zM38 79.7h2V93.2h-2zM40 80.0h3V97.6h-3zM43 83.5h3V94.8h-3zM46 82.3h1V95.2h-1zM47 80.0h3V93.4h-3zM50 79.5h3V93.9h-3zM53 82.4h2V97.1h-2zM55 80.7h2V96.0h-2zM57 79.6h2V93.6h-2zM59 80.4h1V95.7h-1zM60 80.4h2V95.6h-2zM62 81.9h2V93.4h-2zM64 78.6h1V93.4h-1zM65 80.0h3V95.5h-3zM68 78.3h1V97.0h-1zM69 80.7h1V93.2h-1zM70 82.8h2V94.1h-2zM72 80.4h2V96.3h-2zM74 80.7h3V97.1h-3zM77 83.5h1V94.3h-1zM78 80.5h3V95.4h-3zM81 82.3h3V93.6h-3zM84 81.5h1V96.4h-1zM85 79.5h2V93.9h-2zM87 82.1h2V95.7h-2zM89 79.3h2V95.7h-2zM91 82.4h3V94.4h-3zM94 81.8h1V95.0h-1zM95 79.4h1V95.7h-1zM96 80.0h1V94.2h-1zM97 80.9h3V95.5h-3zM100 83.2h2V95.4h-2zM102 82.7h2V92.8h-2zM104 79.1h2V93.7h-2zM106 80.2h2V94.1h-2zM108 82.8h2V94.4h-2zM110 80.3h2V95.6h-2z" fill="#5aa9f7"/></svg></div>
<div class="reg aud" style="left:1144px;top:1162px;width:76px;height:140px"><div class="rt">A...r</div><svg class="a" style="left:0;top:0" width="76" height="140"><path d="M0 81.0h1V95.6h-1zM1 82.7h2V93.2h-2zM3 80.8h1V93.5h-1zM4 82.1h3V96.4h-3zM7 82.9h2V96.3h-2zM9 80.1h2V93.7h-2zM11 83.2h2V95.2h-2zM13 83.2h2V95.1h-2zM15 80.0h3V95.6h-3zM18 83.0h2V96.7h-2zM20 81.2h3V96.5h-3zM23 84.9h1V90.7h-1zM24 85.5h1V90.6h-1zM25 86.2h2V89.7h-2zM27 85.6h3V89.8h-3zM30 85.4h3V90.4h-3zM33 85.6h2V89.7h-2zM35 84.7h1V90.9h-1zM36 83.3h2V90.8h-2zM38 84.2h1V93.4h-1zM39 83.9h2V91.9h-2zM41 84.1h3V91.8h-3zM44 84.7h1V91.7h-1zM45 82.9h3V93.3h-3zM48 83.8h1V92.0h-1zM49 83.8h2V90.6h-2zM51 82.7h3V91.8h-3zM54 83.4h2V91.6h-2zM56 84.7h3V91.4h-3zM59 85.4h2V92.2h-2zM61 85.2h2V90.8h-2zM63 84.6h2V93.4h-2zM65 83.9h2V92.9h-2zM67 85.2h2V93.4h-2zM69 85.5h2V91.3h-2zM71 85.0h2V91.1h-2zM73 84.6h2V92.8h-2zM75 85.4h1V93.3h-1z" fill="#5aa9f7"/></svg></div>
<div class="reg aud" style="left:1240px;top:1162px;width:114px;height:140px"><div class="rt">Au...er</div><svg class="a" style="left:0;top:0" width="114" height="140"><path d="M0 82.9h2V97.4h-2zM2 77.5h2V94.4h-2zM4 77.7h1V97.1h-1zM5 81.6h2V95.0h-2zM7 81.3h2V94.6h-2zM9 77.4h2V94.2h-2zM11 78.2h2V94.3h-2zM13 69.0h3V106.0h-3zM16 80.1h3V95.8h-3zM19 80.4h2V94.9h-2zM21 80.6h3V98.2h-3zM24 80.1h1V98.7h-1zM25 81.8h1V96.2h-1zM26 81.3h1V96.0h-1zM27 77.6h1V95.4h-1zM28 80.2h1V98.0h-1zM29 80.6h2V96.0h-2zM31 79.7h2V96.0h-2zM33 81.6h1V94.9h-1zM34 80.7h2V95.9h-2zM36 78.3h3V97.5h-3zM39 80.2h2V93.7h-2zM41 80.7h3V93.1h-3zM44 77.4h2V97.4h-2zM46 82.6h2V95.7h-2zM48 77.3h1V94.0h-1zM49 79.6h3V98.2h-3zM52 82.7h3V93.4h-3zM55 79.6h1V95.8h-1zM56 78.8h3V94.5h-3zM59 79.3h1V93.3h-1zM60 80.4h3V93.3h-3zM63 79.4h2V94.9h-2zM65 78.2h1V98.4h-1zM66 82.9h3V97.0h-3zM69 66.0h3V108.9h-3zM72 82.1h1V94.5h-1zM73 81.1h2V94.5h-2zM75 80.0h2V93.0h-2zM77 78.8h2V95.0h-2zM79 77.9h1V96.8h-1zM80 77.1h1V97.3h-1zM81 81.0h3V98.4h-3zM84 81.0h2V94.9h-2zM86 78.6h3V96.3h-3zM89 79.6h3V93.7h-3zM92 82.4h1V98.1h-1zM93 78.0h3V96.9h-3zM96 80.8h2V94.4h-2zM98 77.0h1V97.3h-1zM99 78.0h2V97.1h-2zM101 80.2h2V96.6h-2zM103 82.8h3V95.0h-3zM106 66.0h3V108.9h-3zM109 77.5h3V97.2h-3zM112 82.4h2V96.9h-2z" fill="#5aa9f7"/></svg></div>
<div class="reg aud" style="left:1374px;top:1162px;width:90px;height:140px"><div class="rt">A...er</div><svg class="a" style="left:0;top:0" width="90" height="140"><path d="M0 82.5h2V92.7h-2zM2 82.6h2V93.2h-2zM4 83.5h2V92.4h-2zM6 83.2h2V92.9h-2zM8 80.5h2V94.0h-2zM10 81.2h1V95.5h-1zM11 84.4h2V92.1h-2zM13 82.5h1V94.0h-1zM14 80.4h2V94.8h-2zM16 83.4h2V94.8h-2zM18 82.4h2V93.7h-2zM20 80.5h2V92.7h-2zM22 83.3h1V91.9h-1zM23 82.3h1V92.5h-1zM24 83.2h2V92.8h-2zM26 84.2h3V94.4h-3zM29 76.0h3V99.4h-3zM32 80.6h1V93.5h-1zM33 82.6h1V94.1h-1zM34 81.8h3V95.6h-3zM37 80.6h2V95.3h-2zM39 82.2h1V94.3h-1zM40 82.0h3V93.5h-3zM43 83.5h1V91.9h-1zM44 82.2h1V92.5h-1zM45 81.9h3V95.4h-3zM48 81.4h1V91.7h-1zM49 83.9h3V94.2h-3zM52 83.5h2V93.9h-2zM54 82.3h2V95.4h-2zM56 81.8h1V92.6h-1zM57 84.3h3V93.5h-3zM60 82.6h3V91.7h-3zM63 86.5h1V89.5h-1zM64 86.5h2V89.5h-2zM66 86.5h3V89.5h-3zM69 86.5h2V89.5h-2zM71 86.5h3V89.5h-3zM74 86.5h1V89.5h-1zM75 86.5h2V89.5h-2zM77 86.5h1V89.5h-1zM78 86.5h3V89.5h-3zM81 86.5h1V89.5h-1zM82 86.5h2V89.5h-2zM84 86.5h1V89.5h-1zM85 86.5h3V89.5h-3zM88 86.5h2V89.5h-2z" fill="#5aa9f7"/></svg></div>
<div class="reg aud" style="left:1490px;top:1162px;width:86px;height:140px"><div class="rt">A...r</div><svg class="a" style="left:0;top:0" width="86" height="140"><path d="M0 86.5h3V89.5h-3zM3 86.5h2V89.5h-2zM5 86.5h2V89.5h-2zM7 86.5h2V89.5h-2zM9 72.6h2V102.8h-2zM11 70.0h3V105.1h-3zM14 70.0h3V105.1h-3zM17 73.9h2V102.6h-2zM19 78.7h3V101.3h-3zM22 72.2h2V104.4h-2zM24 82.9h2V92.1h-2zM26 84.5h2V90.9h-2zM28 84.6h1V90.7h-1zM29 83.6h3V92.3h-3zM32 83.1h3V93.3h-3zM35 78.9h1V98.1h-1zM36 81.6h2V97.4h-2zM38 75.8h1V95.7h-1zM39 75.1h2V97.8h-2zM41 81.6h2V94.5h-2zM43 80.6h2V98.3h-2zM45 80.2h2V96.2h-2zM47 79.7h2V96.4h-2zM49 79.6h2V94.4h-2zM51 81.9h2V99.4h-2zM53 77.4h3V99.2h-3zM56 80.1h2V99.4h-2zM58 81.9h3V98.1h-3zM61 79.1h2V99.3h-2zM63 80.7h3V101.2h-3zM66 77.1h2V100.5h-2zM68 75.9h1V97.9h-1zM69 76.2h2V94.4h-2zM71 81.3h3V99.6h-3zM74 77.3h2V96.9h-2zM76 78.1h1V97.9h-1zM77 80.4h2V100.9h-2zM79 76.2h2V94.4h-2zM81 77.8h3V99.9h-3zM84 78.0h2V97.7h-2z" fill="#5aa9f7"/></svg></div><svg class="a" style="left:0;top:0" width="202" height="1620" viewBox="0 0 202 1620">
<defs>
<linearGradient id="grill" x1="0" x2="1"><stop offset="0" stop-color="#5e5e5e"/><stop offset="0.45" stop-color="#a9a9a9"/><stop offset="1" stop-color="#585858"/></linearGradient>
<linearGradient id="chrome" x1="0" x2="1"><stop offset="0" stop-color="#777"/><stop offset="0.5" stop-color="#e8e8e8"/><stop offset="1" stop-color="#666"/></linearGradient>
<pattern id="mesh" width="2.2" height="2.2" patternUnits="userSpaceOnUse" patternTransform="rotate(45)"><rect width="2.2" height="2.2" fill="none"/><rect width="1" height="2.2" fill="#000" opacity="0.22"/><rect width="2.2" height="1" fill="#000" opacity="0.22"/></pattern>
<radialGradient id="micbase" cx="0.5" cy="0.4" r="0.6"><stop offset="0" stop-color="#929292"/><stop offset="1" stop-color="#6a6a6a"/></radialGradient>
<linearGradient id="wood" x1="0" x2="1"><stop offset="0" stop-color="#a58560"/><stop offset="0.5" stop-color="#e0c39a"/><stop offset="1" stop-color="#98785a"/></linearGradient>
<linearGradient id="grille2" x1="0" x2="0.3" y1="0" y2="1"><stop offset="0" stop-color="#7e7e7e"/><stop offset="0.25" stop-color="#a6a6a6"/><stop offset="1" stop-color="#8c8c8c"/></linearGradient><pattern id="diag" width="3" height="3" patternUnits="userSpaceOnUse" patternTransform="rotate(40)"><rect width="1.2" height="3" fill="#000" opacity="0.18"/></pattern>
<linearGradient id="lid" x1="0" x2="0" y1="0" y2="1"><stop offset="0" stop-color="#4a5058"/><stop offset="1" stop-color="#262a30"/></linearGradient>
<linearGradient id="red" x1="0" x2="1" y1="0" y2="1"><stop offset="0" stop-color="#d4281e"/><stop offset="0.6" stop-color="#a8150f"/><stop offset="1" stop-color="#6e0906"/></linearGradient>



</defs>

<!-- drums 1 -->
<g>
<ellipse cx="100" cy="343" rx="62" ry="6" fill="#1e1f21" opacity="0.5"/>
<g stroke="#bdbdbd" stroke-width="1.1" fill="none">
<path d="M53.5 287.6 L54.2 324.5 M46.4 292 L58.7 283 M54.2 322 L36.7 333.6 M54.2 322 L63.9 323.2 M54.2 322 L59.3 318"/>
<path d="M70.4 275.9 L71.7 330.4 M70.4 275.9 L80.7 267.5 M71.7 318 L52.2 334.9 M71.7 318 L82 343.3 M71.7 318 L78 326"/>
<path d="M142.3 275.3 L141 329.7 M142.3 275.3 L131.9 267.5 M141 318 L124.2 328.4 M141 318 L155.3 343.3 M141 318 L150.7 326.5"/>
<path d="M82.7 325.2 L81.4 342 M120.9 324.5 L123.5 340 M126.1 299.3 L126.1 321.3"/>
</g>
<g fill="#111"><circle cx="36.7" cy="333.6" r="1.2"/><circle cx="52.2" cy="334.9" r="1.2"/><circle cx="82" cy="343.3" r="1.2"/><circle cx="155.3" cy="343.3" r="1.2"/><circle cx="81.4" cy="342" r="1.2"/><circle cx="123.5" cy="340" r="1.2"/></g>
<rect x="61" y="283.5" width="26.5" height="23" fill="url(#wood)"/>
<ellipse cx="74.2" cy="283.5" rx="13.2" ry="2.6" fill="#d9d2c6"/>
<ellipse cx="74.2" cy="306.5" rx="13.2" ry="1.8" fill="#8a7050"/><path d="M61 305.8 Q74.2 308.6 87.5 305.8" stroke="#d8d8d8" stroke-width="1" fill="none"/><path d="M61 284.6 Q74.2 287.4 87.5 284.6" stroke="#d8d8d8" stroke-width="0.9" fill="none"/>
<rect x="105.4" y="279.5" width="22" height="16.5" fill="url(#wood)"/>
<ellipse cx="116.4" cy="279.5" rx="11" ry="1.8" fill="#d9d2c6"/><path d="M105.4 295.5 Q116.4 297.8 127.4 295.5" stroke="#d8d8d8" stroke-width="1" fill="none"/><path d="M105.4 280.5 Q116.4 282.6 127.4 280.5" stroke="#d8d8d8" stroke-width="0.9" fill="none"/>
<rect x="128" y="287.5" width="9" height="10.5" fill="url(#wood)"/>
<ellipse cx="132.5" cy="287.5" rx="4.5" ry="1" fill="#ddd"/>
<ellipse cx="104" cy="316" rx="19" ry="21.3" fill="#c4a070"/>
<ellipse cx="100.5" cy="316" rx="19" ry="21.3" fill="#b89468"/>
<ellipse cx="100.5" cy="316" rx="17.6" ry="19.8" fill="#d8d8d8"/>
<rect x="90.5" y="309.8" width="20" height="1.1" fill="#333" opacity="0.7"/>
<g fill="#9e8758">
<ellipse cx="81.1" cy="265.9" rx="15.5" ry="1.8" transform="rotate(15 81.1 265.9)"/>
<ellipse cx="130" cy="265.6" rx="17" ry="1.8" transform="rotate(-13 130 265.6)"/>
<ellipse cx="57.4" cy="279.5" rx="12.5" ry="1.8" transform="rotate(4 57.4 279.5)"/>
<ellipse cx="144.9" cy="279.5" rx="10.5" ry="1.8" transform="rotate(4 144.9 279.5)"/>
</g>
</g>

<g>
<path d="M62 475 L64.2 444.4 L138.2 453.9 L138.2 496 Z" fill="#1c1c1e"/>
<path d="M64.2 444.4 L138.2 453.9 L138.2 496 L64.2 475.6 Z" fill="url(#grille2)"/><path d="M64.2 444.4 L138.2 453.9 L138.2 496 L64.2 475.6 Z" fill="url(#diag)"/>
<path d="M138.2 453.9 L151.8 433 L151.8 491.9 L138.2 496 Z" fill="#161618"/>
<path d="M45.2 433.5 L55 427 L151.8 431.5 L151.8 436 L123.3 456.6 L45.2 437.5 Z" fill="#141416"/>
<path d="M55.4 419.5 Q56 417.5 60 417.8 L145 429 Q152.5 431 151.8 434 L147 446 L130 443 L54 427.4 Z" fill="url(#lid)"/>
<path d="M54 427.4 L130 443 L129.5 447 L53.5 431.5 Z" fill="#9a9a9c"/>
<path d="M50 434.4 L54 432.5 L123.5 448 L119.9 450.5 Z" fill="#dcdcdc"/>
<path d="M53.5 431.8 L123.5 447.2 L123.3 448.3 L53.3 432.8 Z" fill="#222"/><path d="M53.5 433.6 L122.5 448.8" stroke="#1a1a1a" stroke-width="1.2" stroke-dasharray="1 0.9"/>
<path d="M45.2 436 L119.9 450.5 L123.3 456.6 L45.2 439.5 Z" fill="#0e0e10"/>
<path d="M53.3 441 V483.8 M115.1 455.9 V502.8" stroke="#9a9a9a" stroke-width="1.6"/>
<path d="M56 483.8 L69 479 M116.5 502.8 L129.4 497.3" stroke="#b0b0b0" stroke-width="1.8"/>
</g>
<g transform="translate(0 156)">
<path d="M62 475 L64.2 444.4 L138.2 453.9 L138.2 496 Z" fill="#1c1c1e"/>
<path d="M64.2 444.4 L138.2 453.9 L138.2 496 L64.2 475.6 Z" fill="url(#grille2)"/><path d="M64.2 444.4 L138.2 453.9 L138.2 496 L64.2 475.6 Z" fill="url(#diag)"/>
<path d="M138.2 453.9 L151.8 433 L151.8 491.9 L138.2 496 Z" fill="#161618"/>
<path d="M45.2 433.5 L55 427 L151.8 431.5 L151.8 436 L123.3 456.6 L45.2 437.5 Z" fill="#141416"/>
<path d="M55.4 419.5 Q56 417.5 60 417.8 L145 429 Q152.5 431 151.8 434 L147 446 L130 443 L54 427.4 Z" fill="url(#lid)"/>
<path d="M54 427.4 L130 443 L129.5 447 L53.5 431.5 Z" fill="#9a9a9c"/>
<path d="M50 434.4 L54 432.5 L123.5 448 L119.9 450.5 Z" fill="#dcdcdc"/>
<path d="M53.5 431.8 L123.5 447.2 L123.3 448.3 L53.3 432.8 Z" fill="#222"/><path d="M53.5 433.6 L122.5 448.8" stroke="#1a1a1a" stroke-width="1.2" stroke-dasharray="1 0.9"/>
<path d="M45.2 436 L119.9 450.5 L123.3 456.6 L45.2 439.5 Z" fill="#0e0e10"/>
<path d="M53.3 441 V483.8 M115.1 455.9 V502.8" stroke="#9a9a9a" stroke-width="1.6"/>
<path d="M56 483.8 L69 479 M116.5 502.8 L129.4 497.3" stroke="#b0b0b0" stroke-width="1.8"/>
</g>
<g transform="translate(0 -156)">
<path d="M88.9 928.9 L136.2 882.8" stroke="#3a3a3a" stroke-width="6"/>
<path d="M92 927 L135 884.5" stroke="#8a8a8a" stroke-width="0.7"/><path d="M90.7 923.5L94.3 927.3M93.5 920.8L97.2 924.5M96.4 918.0L100.0 921.7M99.3 915.2L102.9 918.9M102.8 911.7L106.5 915.4M106.4 908.2L110.1 911.9M110.7 904.0L114.3 907.7M115.0 899.8L118.6 903.5M119.3 895.6L122.9 899.4M124.3 890.7L128.0 894.5M129.3 885.9L133.0 889.6" stroke="#e0e0e0" stroke-width="1.6"/>
<path d="M89 925.5 L93 921.6 L96 924.6 L92 928.5 Z" fill="#ccc"/>
<path d="M135 877.8 L147.8 868.3 L154.4 874.4 L140 885.6 Z" fill="#111"/>
<g fill="#ddd"><circle cx="137" cy="874" r="1"/><circle cx="141" cy="871" r="1"/><circle cx="144.5" cy="868.5" r="1"/><circle cx="145" cy="885" r="1"/><circle cx="149" cy="882" r="1"/><circle cx="152.5" cy="879" r="1"/></g>
<path d="M86.7 918.9 C84 921 78 924.5 71.1 927.8 C67 931 66.5 934.5 65.6 935.6 C62 937.5 57.8 939.4 57.8 939.4 C52 941 47 943.3 44 946 C40 950 39.6 957 41.1 963.3 C43.5 970 46 974 48.9 976.7 C54 982 60 985.6 64.4 985.6 C70 986 75 985.5 76.7 983.3 C80.5 980 83 977 83.3 974.4 C84.5 969 85 966 85.6 963.3 C88 960.5 90 959 92.2 957.8 C96 954 99 951.5 100 950 C102.5 946 103.5 943 103.3 941.1 C101.5 941.5 100.5 942 100 942.2 C98.5 943.5 97.5 945 96.7 945.6 C94.5 943 93.8 941 93.9 938.9 C93.8 936 94.5 934.5 94.4 933.3 C95.5 932 97 931 97.8 930.6 C96 930.3 94.5 930.5 93.3 930.6 C91 929 89.5 927.8 87.8 926.7 C86.5 926 85.5 925.8 84.4 925.6 C85 922.5 86 920 86.7 918.9 Z" fill="url(#red)"/>
<path d="M80 932.2 L91.1 930 L96.7 942.2 L94.4 951.1 L84.4 961.1 L78.9 957.8 L77.8 947.8 Z" fill="#0d0d0d"/>
<rect x="80.5" y="932" width="10" height="6" rx="1" fill="#b8c4cc" transform="rotate(-45 85.5 935)"/>
<rect x="70.5" y="943.5" width="10" height="6" rx="1" fill="#b8c4cc" transform="rotate(-45 75.5 946.5)"/>
<path d="M63.3 951.1 L71.1 960" stroke="#d8d8d8" stroke-width="2.4" stroke-linecap="round"/>
<g fill="#e6e6e6"><circle cx="76.7" cy="967.8" r="1.5"/><circle cx="71.1" cy="972.2" r="1.5"/><circle cx="64.4" cy="974.4" r="1.5"/><circle cx="75.5" cy="976.7" r="1.5"/><circle cx="68.9" cy="980" r="1.5"/></g>
</g>
<g>
<path d="M88.9 928.9 L136.2 882.8" stroke="#3a3a3a" stroke-width="6"/>
<path d="M92 927 L135 884.5" stroke="#8a8a8a" stroke-width="0.7"/><path d="M90.7 923.5L94.3 927.3M93.5 920.8L97.2 924.5M96.4 918.0L100.0 921.7M99.3 915.2L102.9 918.9M102.8 911.7L106.5 915.4M106.4 908.2L110.1 911.9M110.7 904.0L114.3 907.7M115.0 899.8L118.6 903.5M119.3 895.6L122.9 899.4M124.3 890.7L128.0 894.5M129.3 885.9L133.0 889.6" stroke="#e0e0e0" stroke-width="1.6"/>
<path d="M89 925.5 L93 921.6 L96 924.6 L92 928.5 Z" fill="#ccc"/>
<path d="M135 877.8 L147.8 868.3 L154.4 874.4 L140 885.6 Z" fill="#111"/>
<g fill="#ddd"><circle cx="137" cy="874" r="1"/><circle cx="141" cy="871" r="1"/><circle cx="144.5" cy="868.5" r="1"/><circle cx="145" cy="885" r="1"/><circle cx="149" cy="882" r="1"/><circle cx="152.5" cy="879" r="1"/></g>
<path d="M86.7 918.9 C84 921 78 924.5 71.1 927.8 C67 931 66.5 934.5 65.6 935.6 C62 937.5 57.8 939.4 57.8 939.4 C52 941 47 943.3 44 946 C40 950 39.6 957 41.1 963.3 C43.5 970 46 974 48.9 976.7 C54 982 60 985.6 64.4 985.6 C70 986 75 985.5 76.7 983.3 C80.5 980 83 977 83.3 974.4 C84.5 969 85 966 85.6 963.3 C88 960.5 90 959 92.2 957.8 C96 954 99 951.5 100 950 C102.5 946 103.5 943 103.3 941.1 C101.5 941.5 100.5 942 100 942.2 C98.5 943.5 97.5 945 96.7 945.6 C94.5 943 93.8 941 93.9 938.9 C93.8 936 94.5 934.5 94.4 933.3 C95.5 932 97 931 97.8 930.6 C96 930.3 94.5 930.5 93.3 930.6 C91 929 89.5 927.8 87.8 926.7 C86.5 926 85.5 925.8 84.4 925.6 C85 922.5 86 920 86.7 918.9 Z" fill="url(#red)"/>
<path d="M80 932.2 L91.1 930 L96.7 942.2 L94.4 951.1 L84.4 961.1 L78.9 957.8 L77.8 947.8 Z" fill="#0d0d0d"/>
<rect x="80.5" y="932" width="10" height="6" rx="1" fill="#b8c4cc" transform="rotate(-45 85.5 935)"/>
<rect x="70.5" y="943.5" width="10" height="6" rx="1" fill="#b8c4cc" transform="rotate(-45 75.5 946.5)"/>
<path d="M63.3 951.1 L71.1 960" stroke="#d8d8d8" stroke-width="2.4" stroke-linecap="round"/>
<g fill="#e6e6e6"><circle cx="76.7" cy="967.8" r="1.5"/><circle cx="71.1" cy="972.2" r="1.5"/><circle cx="64.4" cy="974.4" r="1.5"/><circle cx="75.5" cy="976.7" r="1.5"/><circle cx="68.9" cy="980" r="1.5"/></g>
</g>
<g>
<ellipse cx="99.7" cy="1127.5" rx="26.8" ry="15.2" fill="url(#micbase)"/>
<ellipse cx="99.7" cy="1129" rx="25" ry="12.5" fill="#858585"/>
<rect x="95.4" y="1088" width="8.8" height="30" fill="url(#chrome)"/>
<rect x="93.6" y="1115.5" width="12.3" height="8.8" rx="1.5" fill="url(#chrome)"/>
<path d="M81 1060 Q80 1082 99.7 1088 Q119 1082 118.5 1060" fill="none" stroke="#9a9a9a" stroke-width="2"/>
<path d="M84.6 1064 H115.3 V1068 Q115.3 1083 99.9 1083 Q84.6 1083 84.6 1068 Z" fill="url(#chrome)"/>
<rect x="83.8" y="1054" width="32.4" height="13" fill="url(#chrome)"/>
<rect x="83.8" y="1055.5" width="32.4" height="3.2" fill="#2a2a2a"/>
<rect x="84.6" y="1063" width="30.7" height="2.2" fill="#333"/>
<path d="M85 1052.5 V1035 Q85 1020 100.1 1020 Q115.3 1020 115.3 1035 V1052.5 Z" fill="url(#grill)"/><path d="M85 1052.5 V1035 Q85 1020 100.1 1020 Q115.3 1020 115.3 1035 V1052.5 Z" fill="url(#mesh)"/>
<rect x="83.8" y="1051.3" width="32.4" height="3.8" rx="1" fill="#e2e2e2"/>
<rect x="78.8" y="1056.5" width="4.6" height="6.5" rx="2" fill="#aaa"/>
<rect x="116.2" y="1056.5" width="4.6" height="6.5" rx="2" fill="#aaa"/>
<rect x="98.8" y="1083" width="2.2" height="5.5" fill="#111"/>
</g>
<g transform="translate(0 156)">
<ellipse cx="99.7" cy="1127.5" rx="26.8" ry="15.2" fill="url(#micbase)"/>
<ellipse cx="99.7" cy="1129" rx="25" ry="12.5" fill="#858585"/>
<rect x="95.4" y="1088" width="8.8" height="30" fill="url(#chrome)"/>
<rect x="93.6" y="1115.5" width="12.3" height="8.8" rx="1.5" fill="url(#chrome)"/>
<path d="M81 1060 Q80 1082 99.7 1088 Q119 1082 118.5 1060" fill="none" stroke="#9a9a9a" stroke-width="2"/>
<path d="M84.6 1064 H115.3 V1068 Q115.3 1083 99.9 1083 Q84.6 1083 84.6 1068 Z" fill="url(#chrome)"/>
<rect x="83.8" y="1054" width="32.4" height="13" fill="url(#chrome)"/>
<rect x="83.8" y="1055.5" width="32.4" height="3.2" fill="#2a2a2a"/>
<rect x="84.6" y="1063" width="30.7" height="2.2" fill="#333"/>
<path d="M85 1052.5 V1035 Q85 1020 100.1 1020 Q115.3 1020 115.3 1035 V1052.5 Z" fill="url(#grill)"/><path d="M85 1052.5 V1035 Q85 1020 100.1 1020 Q115.3 1020 115.3 1035 V1052.5 Z" fill="url(#mesh)"/>
<rect x="83.8" y="1051.3" width="32.4" height="3.8" rx="1" fill="#e2e2e2"/>
<rect x="78.8" y="1056.5" width="4.6" height="6.5" rx="2" fill="#aaa"/>
<rect x="116.2" y="1056.5" width="4.6" height="6.5" rx="2" fill="#aaa"/>
<rect x="98.8" y="1083" width="2.2" height="5.5" fill="#111"/>
</g>

<!-- drums 2 -->
<g>
<ellipse cx="100" cy="1436" rx="58" ry="5" fill="#1c1d1f" opacity="0.5"/>
<g stroke="#b5b5b5" stroke-width="1" fill="none">
<path d="M79.5 1358 L80 1425 M80 1418 L63 1430 M80 1418 L92 1432"/>
<path d="M129 1360 L127.5 1432 M127.5 1425 L117 1432 M127.5 1425 L145 1436"/>
<path d="M143.3 1372 L142 1418 M142 1412 L132 1420 M142 1412 L156 1424"/>
<path d="M61 1394 L61 1416 M61 1412 L56 1424 M61 1412 L72 1428 M72 1396 L72 1422"/>
</g>
<rect x="61" y="1375.5" width="16" height="19" fill="#151515"/>
<rect x="61" y="1382.5" width="16" height="4" fill="#8e7130"/>
<ellipse cx="69" cy="1375.5" rx="8" ry="1.6" fill="#dcdcdc"/>
<rect x="67.5" y="1380.5" width="18.5" height="16.5" fill="#151515"/>
<rect x="67.5" y="1386" width="18.5" height="4" fill="#8e7130"/>
<ellipse cx="76.8" cy="1380.5" rx="9.3" ry="1.8" fill="#dcdcdc"/>
<path d="M67.5 1396.5 H86" stroke="#d0d0d0" stroke-width="1.4"/>
<g fill="#d8d8d8"><rect x="69" y="1386" width="1.2" height="9"/><rect x="73.5" y="1386" width="1.2" height="9"/><rect x="78" y="1386" width="1.2" height="9"/><rect x="82.5" y="1386" width="1.2" height="9"/></g>
<rect x="104" y="1373.5" width="20.5" height="12.5" fill="#151515"/>
<rect x="104" y="1377.5" width="20.5" height="3.5" fill="#8e7130"/>
<ellipse cx="114.2" cy="1373.5" rx="10.3" ry="1.8" fill="#dcdcdc"/>
<path d="M104 1386 H124.5" stroke="#d0d0d0" stroke-width="1.4"/>
<rect x="117.5" y="1382.5" width="19.5" height="8" fill="#151515"/>
<ellipse cx="127.2" cy="1382.5" rx="9.8" ry="1.5" fill="#dcdcdc"/>
<path d="M117.5 1390.5 H137" stroke="#d0d0d0" stroke-width="1.2"/>
<ellipse cx="101" cy="1413.6" rx="19.5" ry="19.6" fill="#2e2818"/>
<ellipse cx="97.8" cy="1413.6" rx="19" ry="19.5" fill="#111"/>
<ellipse cx="97.8" cy="1413.6" rx="17.8" ry="18.3" fill="#d6d6d6"/>
<rect x="87" y="1406" width="5" height="6.5" fill="#444" opacity="0.8"/>
<rect x="88.6" y="1395" width="0.9" height="37" fill="#999"/>
<g fill="#a08050">
<ellipse cx="80.5" cy="1358" rx="14.5" ry="1.6" transform="rotate(13 80.5 1358)"/>
<ellipse cx="130" cy="1358.3" rx="16.5" ry="1.6" transform="rotate(-14 130 1358.3)"/>
<ellipse cx="58.8" cy="1372" rx="15.3" ry="1.6" transform="rotate(4 58.8 1372)"/>
<ellipse cx="143.3" cy="1373" rx="10" ry="1.6" transform="rotate(4 143.3 1373)"/>
</g>
</g>

<!-- organ -->
<g>
<path d="M51.7 1532.2 L49.7 1575.7 M71.8 1537.4 L71.8 1567.2 M129.5 1549 L129.5 1603.5 M147 1543.5 L150.9 1591.2" stroke="#121212" stroke-width="1.5"/>
<path d="M49.7 1525 L129.5 1541 L148.9 1533.5 L148.9 1538.5 L129.5 1548.5 L49.7 1532.5 Z" fill="#151515"/>
<path d="M60.7 1518.9 L72.4 1516 L148.9 1530 L148.9 1532.5 L123.6 1536.8 L60.7 1521.5 Z" fill="#d46a2e"/>
<path d="M49.7 1524.2 L58.5 1522 L57 1525.8 L49.7 1526.8 Z" fill="#c85f26"/>
<path d="M123.6 1536.5 L148.9 1531.5 L148.9 1534.5 L129.5 1541.8 L121 1540.4 Z" fill="#c85f26"/>
<path d="M58.5 1522 L61 1521.4 L123.6 1536.7 L121 1540.4 L57 1525.8 Z" fill="#e8e8e8"/>
<path d="M59.5 1522.5 L123.2 1537.6" stroke="#161616" stroke-width="1.3" stroke-dasharray="1 0.9"/>
</g>
</svg>
<svg class="a" style="left:0;top:0" width="2160" height="1620" viewBox="0 0 2160 1620">
<g fill="none" stroke="#fb3b4a" stroke-width="5" stroke-linecap="round" stroke-linejoin="round">
<path d="M1832.2 593.9 C1831.8 586 1831.2 579 1831.4 574.6 C1845 572 1862 569.5 1872.7 569.6 C1879 570 1882.6 574 1884 580 C1885.3 592 1885 605 1883.8 609.7 C1881.5 618 1877 624 1866.8 633.2 C1861 637.5 1853 640.5 1846.9 640.8 C1838 641.2 1827 640.8 1823 639.5 C1816 637.5 1815.5 633.5 1821 631.2 C1830 628.5 1840 627.8 1846.9 627.9 C1856 628 1864 630.5 1870.4 636.1 C1875 642 1876.5 650 1876.6 660 C1877 672 1876.8 682.4 1876.5 686 C1875.5 694 1872 698 1868.6 702.4"/>
<path d="M1832.2 592.1 C1830 608 1825 628 1822.9 641.4 C1819.5 660 1816 676 1813.5 691.2"/>
<path d="M1954.8 676.6 C1951.5 671 1950.8 665 1951.3 660 C1952 652 1958 636 1964.2 623.8 C1972 606 1978 596 1982.9 586.3 C1988 575 1991.5 566 1993.5 559.3 C1995 552 1996 546 1997.5 542.5 C1999 538.5 2001.5 537 2003.2 540 C2005 545 2005 556 2005 565.2 L2004.6 656.6"/>
<path d="M1934.3 617.4 H2035.8"/>
<path d="M1830.8 820.1 C1831 805 1831.3 790 1831.5 783.3 C1832 770 1833 762 1834.3 755.6 C1836 746 1838.5 740 1841.9 736.1 C1845 732.5 1848.5 731.3 1851.7 731.3 C1855.5 731.5 1858.5 733.5 1861.4 737 C1865 742 1868 748 1871.1 754.2 C1875 763 1879 772 1882.2 780.6 C1885 787 1888 794 1890.6 800 C1892.5 803.5 1894.5 806 1895.4 806.9 C1895.8 800 1895.2 795 1894.7 788.9 C1893.8 775 1893 765 1892.6 755.6 C1892.5 745 1892.8 735 1893.3 727.8 C1894 722 1895.5 719 1897.5 718.1 C1900 717 1903.5 716.9 1906.5 716.9"/>
<path d="M2049.6 722.9 C2040 723.5 2030 724.5 2021.1 726.4 C2012 729 2004 733 1996.1 737.5 C1988 742.5 1982 747 1976.7 752.8 C1970.5 760 1967 768 1964.2 776.4 C1961.5 786 1960.2 795 1960 804.2 C1959.8 815 1960.2 825 1961.4 831.9 C1963.5 840 1968 845 1973.9 847.2 C1980 850 1987 850.8 1993.3 850.7 C2000 850.5 2006 848.5 2011.4 845.8 C2020 841.5 2028 836 2035 831.9 C2042 827.5 2048 823 2051.7 818.1 C2053.5 812 2053.5 806 2052.4 801.4 C2050 796 2045 793 2039.2 790.3 C2031 786.5 2022 784 2015.6 781.9 C2025 780.5 2036 780 2046.1 779.9 C2055 779.6 2062 779.3 2066.9 779.2 C2080 778.5 2092 778 2100.3 777.8"/>
<path d="M1856 887.6 C1856.5 900 1857 915 1857 927.8 L1857 980.9 C1860.5 981 1864 980.9 1867.4 980.2 C1873 978.5 1878 977 1883 976.4 C1890 975.6 1899 975.7 1907.6 975.7"/>
<path d="M1982.8 874 C1981 880 1980.4 885 1980.2 888.9 L1980.2 979.6"/>
<path d="M1982.1 870.7 C1986 869.3 1990 868.9 1994.5 868.8 L2030.7 868.8 C2037 870 2042 873.5 2046.3 878.5 C2054 887 2059 896 2063.2 905.7 C2066 914 2067.2 922 2067 930.4 C2066.6 938 2065.5 943 2063.2 948.5 C2059 954 2054 958 2048.9 961.5 C2040 967 2030 971 2020.4 974.5 C2011 976.5 2000 977.5 1990.6 977.7"/>
</g>
<path d="M1834 858.4 C1833.8 870 1833.6 880 1833.1 888.9 C1832 900 1831 912 1829.2 922.6 C1826 940 1821 956 1816.9 971.2" fill="none" stroke="#000" stroke-width="4.6" stroke-linecap="round"/>
</svg>
<svg class="a" style="left:0;top:0" width="2160" height="1620" viewBox="0 0 2160 1620">
<rect x="602" y="215" width="2.2" height="1405" fill="#f2f2f2"/>
<path d="M577 165 H629 V191.5 L603.1 216 L577 191.5 Z" fill="rgba(70,70,72,0.78)" stroke="#ececec" stroke-width="2.2" stroke-linejoin="miter"/>
</svg>
</body></html>
